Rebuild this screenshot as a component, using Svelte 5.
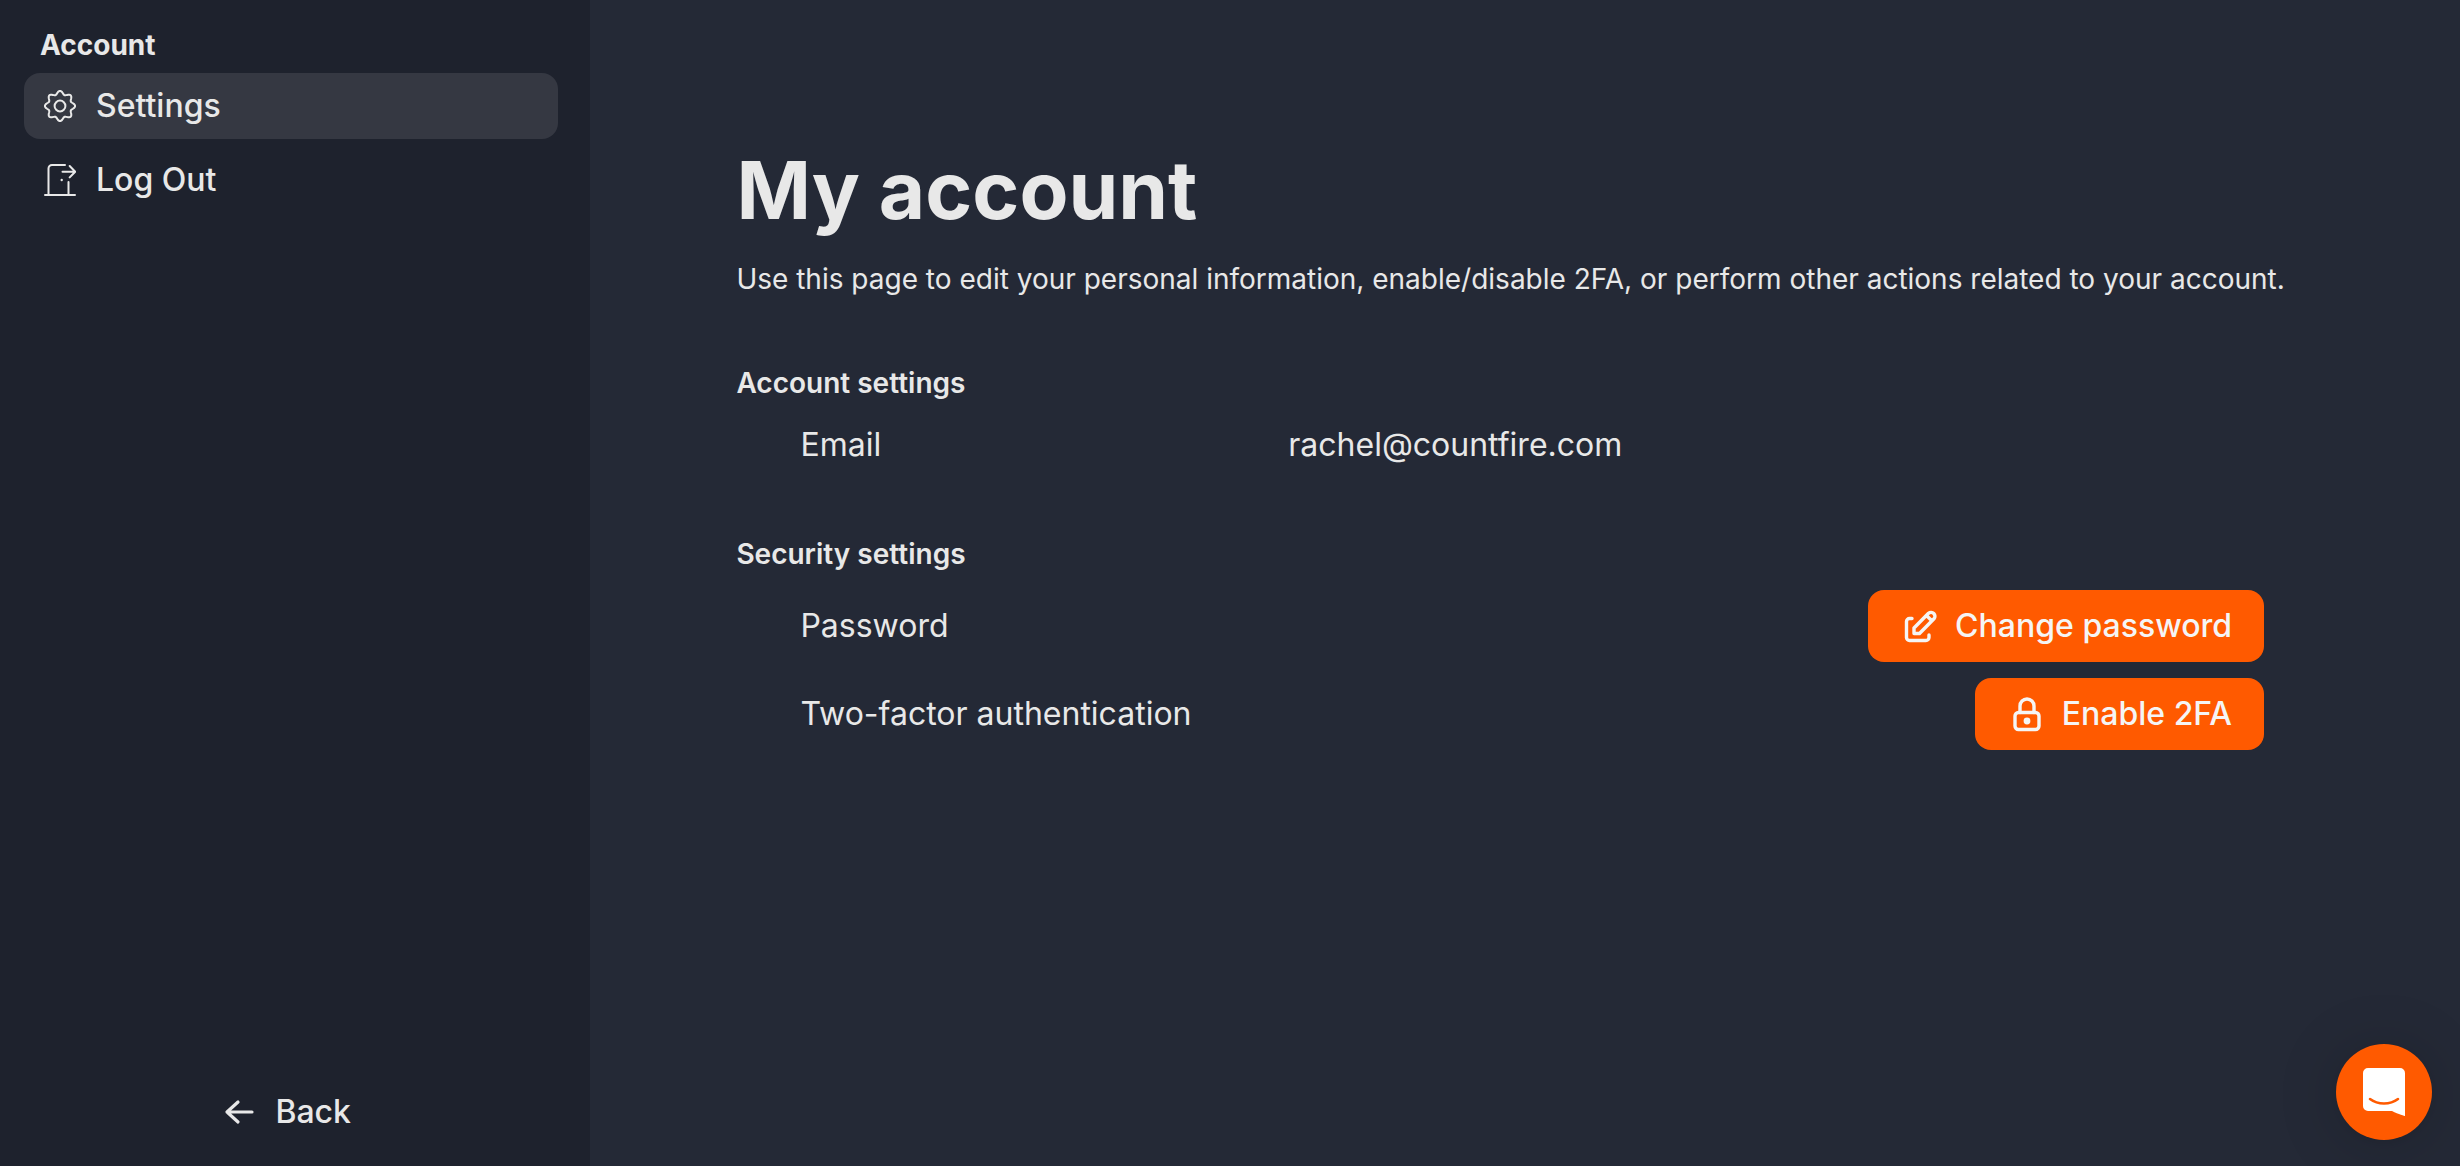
<script lang="ts">
  type NavItem = { id: string; name: string };

  const navItems: NavItem[] = [
    { id: 'settings', name: 'Settings' },
    { id: 'logout', name: 'Log Out' }
  ];

  let activeItem = $state('settings');

  const email = 'rachel@countfire.com';

  // Eight-lobed gear outline, centred in a 32x32 box
  function gearPath(radius: number, depth: number) {
    const points: string[] = [];
    for (let deg = 0; deg < 360; deg += 3) {
      const a = (deg * Math.PI) / 180;
      const r = radius + depth * Math.cos(8 * a);
      points.push(`${(16 + r * Math.sin(a)).toFixed(2)} ${(16 - r * Math.cos(a)).toFixed(2)}`);
    }
    return `M${points.join('L')}Z`;
  }
</script>

<div class="layout">
  <aside class="sidebar">
    <h2 class="sidebar-title">Account</h2>
    <nav class="nav">
      {#each navItems as item (item.id)}
        <a
          class="nav-link"
          class:active={activeItem === item.id}
          href="#{item.id}"
          onclick={() => (activeItem = item.id)}
        >
          <svg class="nav-icon" viewBox="0 0 32 32" aria-hidden="true">
            {#if item.id === 'settings'}
              <path d={gearPath(13.4, 1.7)} />
              <circle cx="16" cy="16" r="5.4" />
            {:else}
              <path d="M1 31h30M4.500 31V4.500a3.500 3.500 0 0 1 3.500-3.500h13M24.500 31V18" />
              <path d="M18.500 7.700H31M25.700 2l5.500 5.700-5.500 5.700" />
              <circle class="dot" cx="17.700" cy="16" r="1.200" />
            {/if}
          </svg>
          {item.name}
        </a>
      {/each}
    </nav>
    <button class="back" type="button">
      <svg class="back-icon" viewBox="0 0 32 32" aria-hidden="true">
        <path d="M29 16H4M15 6L4 16l11 10" />
      </svg>
      Back
    </button>
  </aside>

  <main class="content">
    <h1>My account</h1>
    <p class="intro">
      Use this page to edit your personal information, enable/disable 2FA, or perform other actions
      related to your account.
    </p>

    <section>
      <h3>Account settings</h3>
      <div class="row">
        <span>Email</span>
        <span>{email}</span>
      </div>
    </section>

    <section>
      <h3>Security settings</h3>
      <div class="rows">
        <div class="row">
          <span>Password</span>
          <button class="btn" type="button">
            <svg class="btn-icon" viewBox="0 0 40 40" aria-hidden="true">
              <path d="M12 12.500H9.500a3 3 0 0 0-3 3V31.500a3 3 0 0 0 3 3H26a3 3 0 0 0 3-3V29" />
              <path d="M14 27.500v-5.500L28.500 7.300a3.900 3.900 0 0 1 5.500 5.500L19.500 27.500zM26.500 9.500l5.300 5.300" />
            </svg>
            Change password
          </button>
        </div>
        <div class="row">
          <span>Two-factor authentication</span>
          <button class="btn" type="button">
            <svg class="btn-icon" viewBox="0 0 40 40" aria-hidden="true">
              <rect x="8" y="18.500" width="24" height="17" rx="3.500" />
              <path d="M13 18.500v-6.500a7 7 0 0 1 14 0v6.500" />
              <circle class="dot" cx="20" cy="27" r="3.400" />
            </svg>
            Enable 2FA
          </button>
        </div>
      </div>
    </section>
  </main>

  <button class="chat" type="button" aria-label="Open chat">
    <svg viewBox="0 0 42 48" aria-hidden="true">
      <path class="bubble" d="M5 0h32a5 5 0 0 1 5 5v43s-6.500-1.600-13-5H5a5 5 0 0 1-5-5V5a5 5 0 0 1 5-5z" />
      <path class="smile" d="M7 31c8 6 20 6 28 0" />
    </svg>
  </button>
</div>

<style>
  :global(body) {
    margin: 0;
    background: #242936;
  }

  .layout {
    display: flex;
    min-height: 100vh;
    font-family: Inter, 'Liberation Sans', sans-serif;
    font-size: 32px;
    line-height: 48px;
    color: #e8e8e8;
    background: #242936;
  }

  button {
    font: inherit;
    border: none;
    cursor: pointer;
  }

  svg {
    fill: none;
    stroke: currentColor;
    stroke-linecap: round;
    stroke-linejoin: round;
  }

  .dot {
    fill: currentColor;
    stroke: none;
  }

  /* Sidebar */
  .sidebar {
    display: flex;
    flex-direction: column;
    box-sizing: border-box;
    flex: 0 0 24%;
    padding: 24px 32px 30px 24px;
    background: #1e222d;
  }

  .sidebar-title {
    margin: 0 0 7px;
    padding: 0 16px;
    font-size: 28px;
    font-weight: 700;
    line-height: 42px;
  }

  .nav {
    display: flex;
    flex-direction: column;
    gap: 8px;
  }

  .nav-link {
    display: flex;
    align-items: center;
    gap: 20px;
    padding: 9px 20px;
    border-radius: 16px;
    color: inherit;
    text-decoration: none;
    font-weight: 500;
  }

  .nav-link.active {
    background: #353842;
  }

  .nav-icon {
    width: 32px;
    height: 32px;
    stroke-width: 2;
  }

  .back {
    display: flex;
    align-items: center;
    align-self: center;
    gap: 20px;
    margin-top: auto;
    padding: 0 8px 0 0;
    background: none;
    color: inherit;
    font-weight: 500;
  }

  .back-icon {
    width: 32px;
    height: 32px;
    stroke-width: 3.2;
  }

  /* Main column */
  .content {
    flex: 1;
    min-width: 0;
    padding: 142px 146px 64px;
    font-weight: 400;
  }

  h1 {
    margin: 0 0 20px;
    font-size: 80px;
    font-weight: 700;
    line-height: 96px;
  }

  .intro {
    margin: 0;
    font-size: 28px;
    line-height: 42px;
  }

  section {
    margin-top: 62px;
  }

  h3 {
    margin: 0 0 15px;
    font-size: 28px;
    font-weight: 600;
    line-height: 42px;
  }

  .rows {
    display: flex;
    flex-direction: column;
    gap: 16px;
  }

  .row {
    display: grid;
    grid-template-columns: 1fr 2fr;
    align-items: center;
    min-height: 52px;
    padding: 0 50px 0 64px;
  }

  .btn {
    display: flex;
    align-items: center;
    justify-self: end;
    gap: 15px;
    padding: 12px 32px;
    border-radius: 16px;
    background: #ff5a00;
    color: #f5f5f5;
    font-weight: 500;
  }

  .btn-icon {
    width: 40px;
    height: 40px;
    stroke-width: 3.4;
  }

  /* Floating chat launcher */
  .chat {
    position: fixed;
    right: 28px;
    bottom: 26px;
    display: flex;
    align-items: center;
    justify-content: center;
    width: 96px;
    height: 96px;
    padding: 0;
    border-radius: 50%;
    background: #ff5a00;
    box-shadow: 0 2px 12px rgba(0, 0, 0, 0.06), 0 4px 64px rgba(0, 0, 0, 0.16);
  }

  .chat svg {
    width: 42px;
    height: 48px;
  }

  .bubble {
    fill: #fff;
    stroke: none;
  }

  .smile {
    stroke: #ff5a00;
    stroke-width: 2.6;
  }
</style>
